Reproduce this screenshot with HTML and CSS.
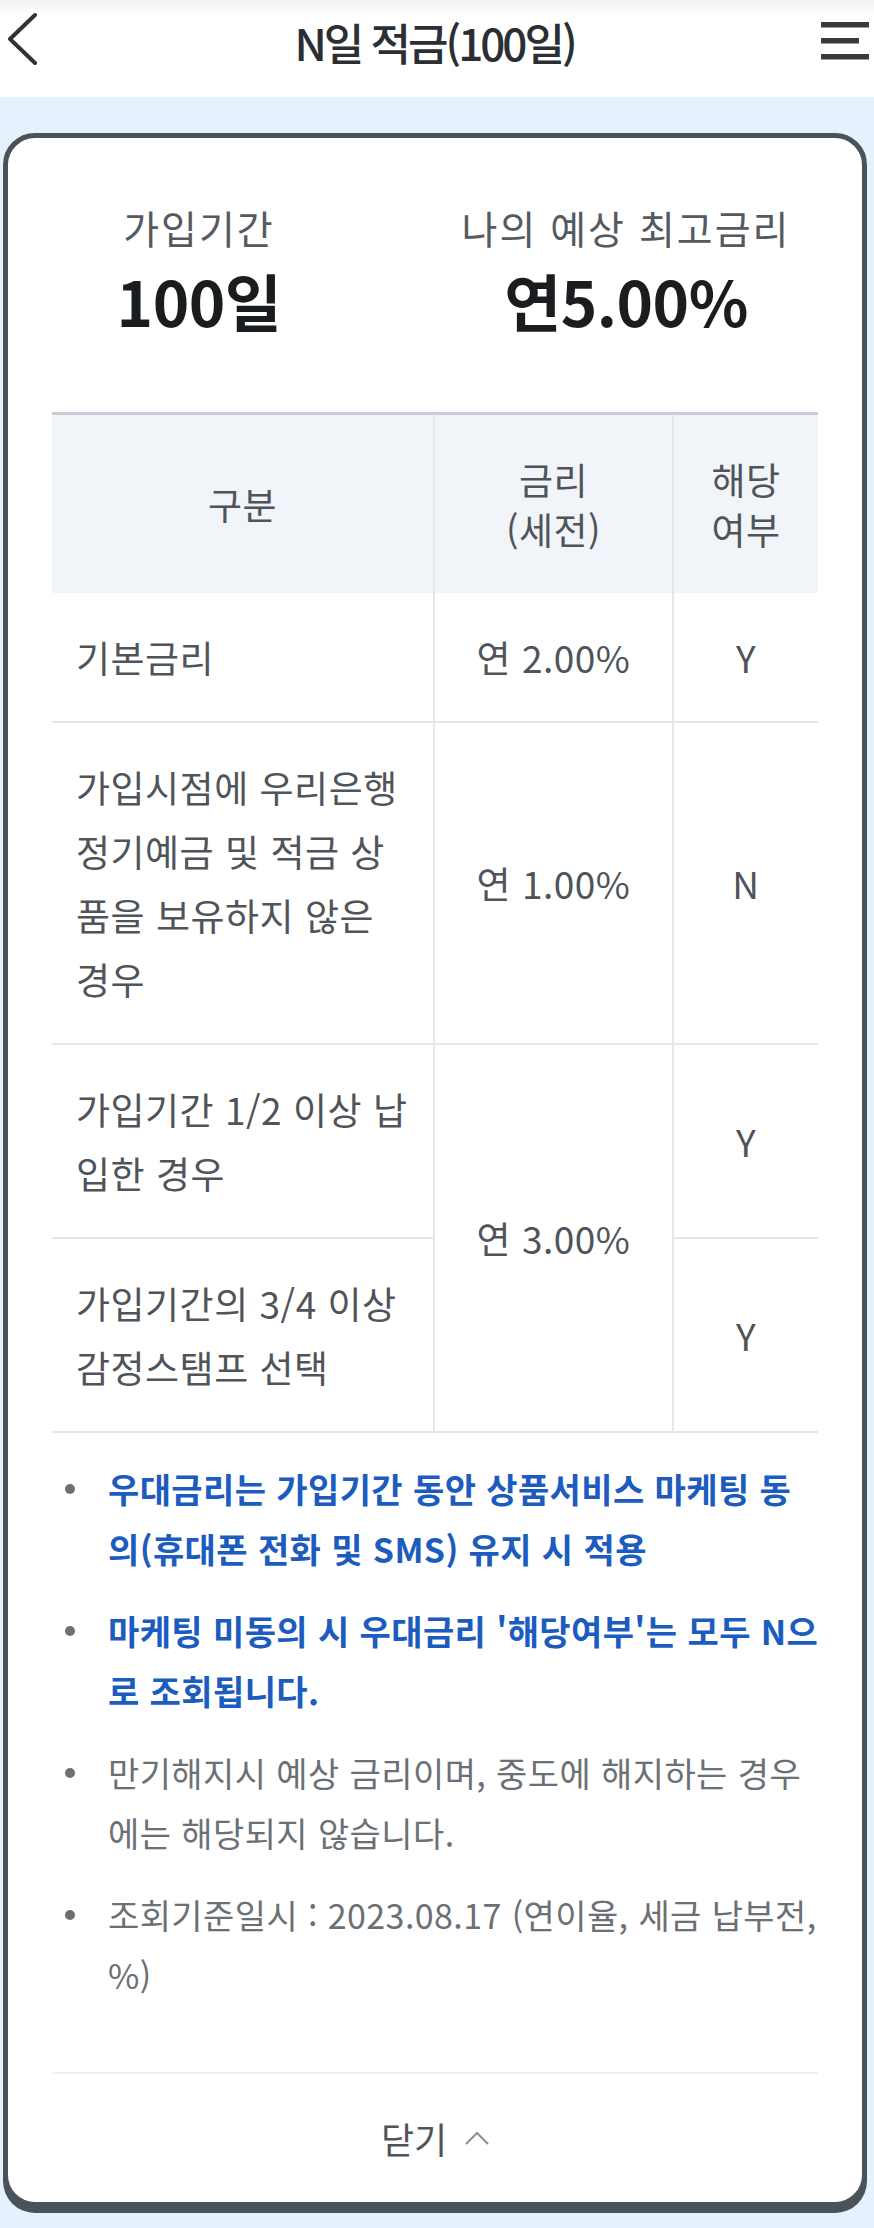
FILE: index.html
```html
<!DOCTYPE html>
<html lang="ko">
<head>
<meta charset="utf-8">
<title>N일 적금(100일)</title>
<link rel="stylesheet" href="styles.css">
</head>
<body>
<header class="topbar">
  <button class="icon-btn back" aria-label="뒤로">
    <svg width="40" height="60" viewBox="0 0 40 60"><polyline points="27,3 2,27 27,51" fill="none" stroke="#2f3337" stroke-width="4" stroke-linecap="round" stroke-linejoin="round"/></svg>
  </button>
  <h1 class="title">N일 적금(100일)</h1>
  <button class="icon-btn menu" aria-label="메뉴">
    <svg width="48" height="40" viewBox="0 0 48 40"><rect x="0" y="0" width="48" height="5.5" fill="#363b40"/><rect x="0" y="16" width="38" height="5.5" fill="#363b40"/><rect x="0" y="32" width="48" height="5.5" fill="#363b40"/></svg>
  </button>
</header>
<main class="page">
  <section class="card">
    <div class="summary">
      <div class="summary-item">
        <div class="summary-label">가입기간</div>
        <div class="summary-value">100일</div>
      </div>
      <div class="summary-item">
        <div class="summary-label">나의 예상 최고금리</div>
        <div class="summary-value">연5.00%</div>
      </div>
    </div>
    <table class="rate-table">
      <colgroup><col class="c1"><col class="c2"><col class="c3"></colgroup>
      <thead>
        <tr><th>구분</th><th>금리<br>(세전)</th><th>해당<br>여부</th></tr>
      </thead>
      <tbody>
        <tr><td class="desc">기본금리</td><td>연 2.00%</td><td>Y</td></tr>
        <tr><td class="desc">가입시점에 우리은행 정기예금 및 적금 상품을 보유하지 않은 경우</td><td>연 1.00%</td><td>N</td></tr>
        <tr><td class="desc">가입기간 1/2 이상 납입한 경우</td><td rowspan="2">연 3.00%</td><td>Y</td></tr>
        <tr><td class="desc">가입기간의 3/4 이상 감정스탬프 선택</td><td>Y</td></tr>
      </tbody>
    </table>
    <ul class="notes">
      <li class="strong">우대금리는 가입기간 동안 상품서비스 마케팅 동의(휴대폰 전화 및 SMS) 유지 시 적용</li>
      <li class="strong">마케팅 미동의 시 우대금리 '해당여부'는 모두 N으로 조회됩니다.</li>
      <li>만기해지시 예상 금리이며, 중도에 해지하는 경우에는 해당되지 않습니다.</li>
      <li>조회기준일시 : 2023.08.17 (연이율, 세금 납부전, %)</li>
    </ul>
    <div class="card-foot">
      <button class="close-btn">닫기
        <svg width="24" height="14" viewBox="0 0 24 14"><polyline points="1,13 12,2 23,13" fill="none" stroke="#8a8f94" stroke-width="2"/></svg>
      </button>
    </div>
  </section>
</main>
</body>
</html>
```

FILE: styles.css
```css
* { box-sizing: border-box; }
html, body { margin: 0; padding: 0; }
body {
  width: 874px;
  background: #e5f1fc;
  font-family: "Noto Sans CJK KR", "Noto Sans", sans-serif;
  color: #4f5459;
}
.topbar {
  height: 97px;
  background: linear-gradient(#f2f2f2 0, #ffffff 16px, #ffffff 100%);
  display: flex;
  align-items: center;
  justify-content: space-between;
  padding: 0 5px 14px 8px;
}
.icon-btn {
  border: 0;
  background: none;
  padding: 0;
  display: flex;
}
.title {
  margin: 0;
  font-size: 44px;
  font-weight: 500;
  letter-spacing: -3px;
  color: #2b2f33;
  line-height: 50px;
}
.page {
  padding: 36px 7px 15px 3px;
}
.card {
  background: #fff;
  border: 5px solid #4b5259;
  border-radius: 32px;
  box-shadow: 0 6px 0 #4b5259;
  padding: 0 44px;
}
.summary {
  display: grid;
  grid-template-columns: 382px 1fr;
  margin: 0 -44px;
  padding: 64px 0 76px;
  text-align: center;
}
.summary-label {
  font-size: 39px;
  line-height: 50px;
  letter-spacing: 2px;
  color: #555a5f;
}
.summary-value {
  margin-top: 12px;
  font-size: 62px;
  line-height: 72px;
  font-weight: 700;
  letter-spacing: -0.5px;
  color: #1a1d20;
}
.rate-table {
  width: 100%;
  border-collapse: collapse;
  border-top: 3px solid #c9cfd6;
  font-size: 37px;
  letter-spacing: 0.5px;
  color: #4f5459;
}
.rate-table .c1 { width: 382px; }
.rate-table .c2 { width: 239px; }
.rate-table th {
  background: #f1f5fa;
  font-weight: 400;
  line-height: 50px;
  padding: 39px 0;
  text-align: center;
  border-left: 2px solid #e3e8ee;
}
.rate-table th:first-child { border-left: 0; }
.rate-table td {
  line-height: 64px;
  padding: 32px 0;
  text-align: center;
  vertical-align: middle;
  border-left: 2px solid #e3e8ee;
  border-bottom: 2px solid #e3e8ee;
}
.rate-table td.desc {
  text-align: left;
  padding: 32px 22px 32px 24px;
  border-left: 0;
}
.notes {
  list-style: none;
  margin: 26px -2px 0 0;
  padding: 0 0 67px 56px;
}
.notes li {
  position: relative;
  font-size: 34px;
  line-height: 60px;
  letter-spacing: 0.4px;
  color: #6b7075;
  margin-bottom: 22px;
}
.notes li:last-child { margin-bottom: 0; }
.notes li::before {
  content: "";
  position: absolute;
  left: -43px;
  top: 25px;
  width: 10px;
  height: 10px;
  border-radius: 50%;
  background: #6b7075;
}
.notes li.strong {
  color: #1c5cbf;
  font-weight: 700;
}
.card-foot {
  border-top: 2px solid #eff1f4;
  height: 130px;
  display: flex;
  align-items: center;
  justify-content: center;
}
.close-btn {
  border: 0;
  background: none;
  font-family: inherit;
  font-size: 36px;
  letter-spacing: 0;
  color: #4f5459;
  display: flex;
  align-items: center;
  gap: 18px;
  padding: 0;
}
```
